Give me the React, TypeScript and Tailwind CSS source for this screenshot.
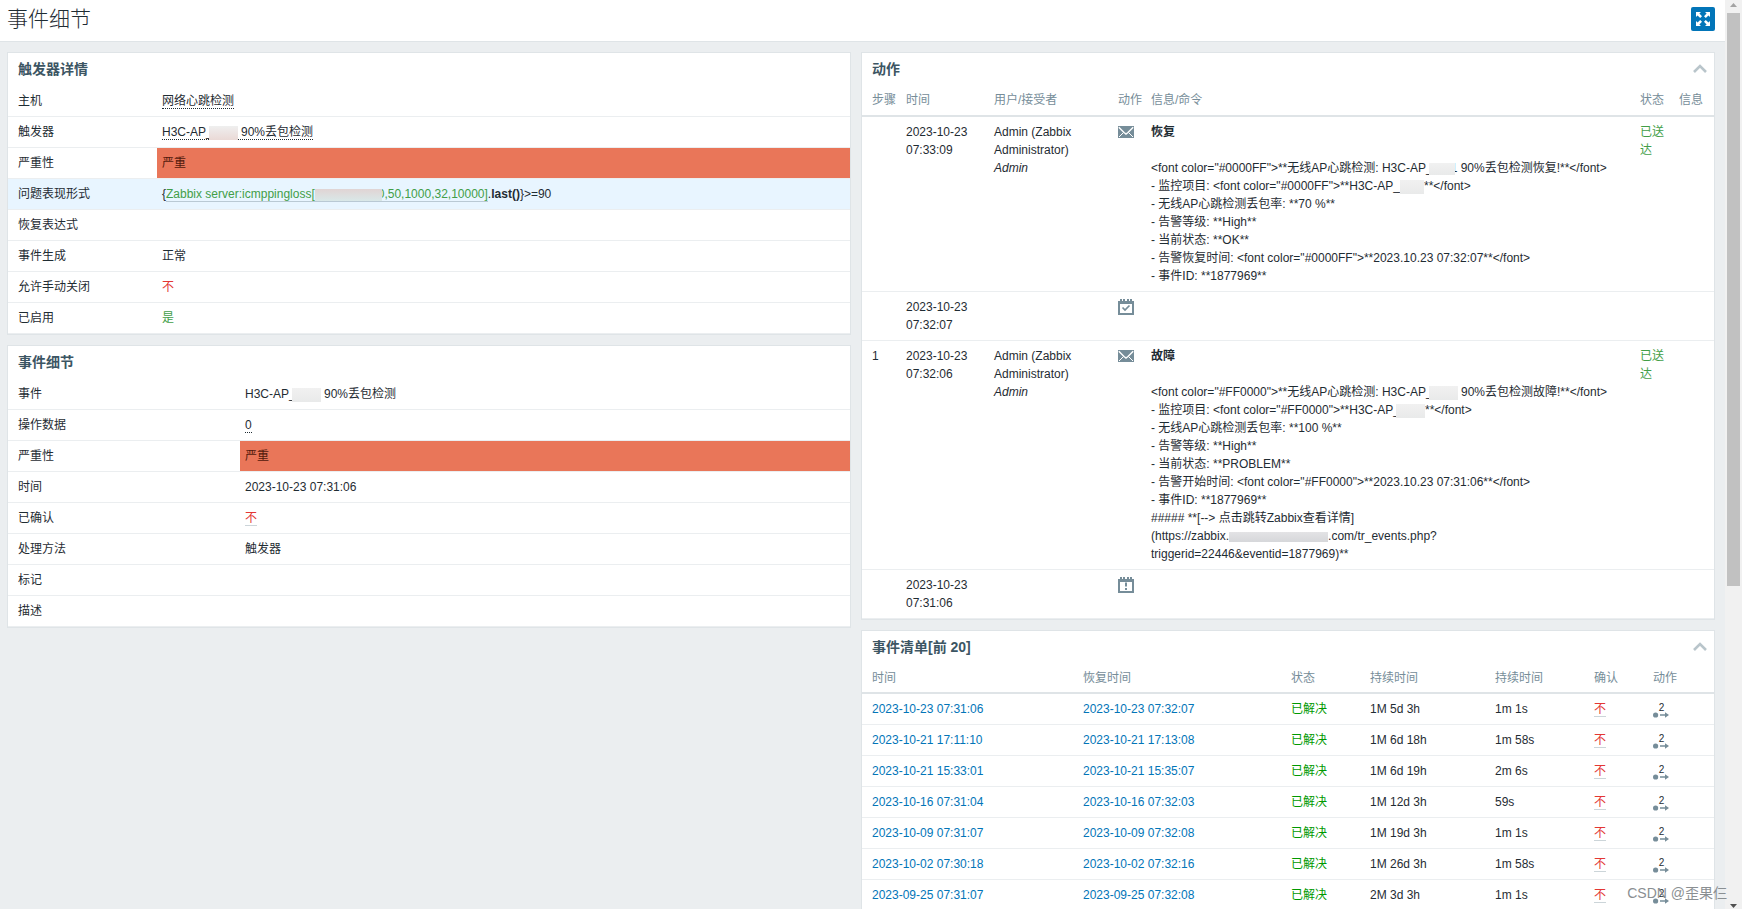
import React from 'react';
import { clsx } from 'clsx';

interface DetailRow {
  label: string;
  value?: React.ReactNode;
  severity?: boolean;
  highlight?: boolean;
}

interface ActionRow {
  step?: string;
  date: string;
  time: string;
  user?: boolean;
  icon: 'mail' | 'resolved' | 'problem';
  subject?: string;
  message?: React.ReactNode[];
}

interface EventRow {
  time: string;
  recovery: string;
  age: string;
  duration: string;
}

function Mask({ className }: { className: string }) {
  return <span className={clsx('relative inline-block align-middle bg-linear-to-b', className)} />;
}

const NAME_MASK = '-ml-1 w-[29px] h-[14px] from-[#f1f1f1] to-[#e9eaea]';
const dotted = 'border-b border-dotted border-[#1f2c33]';

const triggerRows: DetailRow[] = [
  { label: '主机', value: <a href="#host" className={dotted}>网络心跳检测</a> },
  {
    label: '触发器',
    value: (
      <a href="#trigger" className={dotted}>
        H3C-AP_<Mask className="-ml-1 w-[29px] h-[14px] from-[#efefef] to-[#ead9d6]" /> 90%丢包检测
      </a>
    ),
  },
  { label: '严重性', value: '严重', severity: true },
  {
    label: '问题表现形式',
    highlight: true,
    value: (
      <>
        {'{'}
        <a href="#item" className="text-[#429e47] border-b border-[#b9c9d4]">
          Zabbix server:icmppingloss[
          <Mask className="-mr-1 w-[67px] h-3 from-[#e0d4d4] to-[#d9e8e8]" />
          0,50,1000,32,10000]
        </a>
        .<b>last()</b>
        {'}>=90'}
      </>
    ),
  },
  { label: '恢复表达式' },
  { label: '事件生成', value: '正常' },
  { label: '允许手动关闭', value: <span className="text-[#e33734]">不</span> },
  { label: '已启用', value: <span className="text-[#429e47]">是</span> },
];

const eventDetailRows: DetailRow[] = [
  { label: '事件', value: <>H3C-AP_<Mask className={NAME_MASK} /> 90%丢包检测</> },
  { label: '操作数据', value: <a href="#data" className={dotted}>0</a> },
  { label: '严重性', value: '严重', severity: true },
  { label: '时间', value: '2023-10-23 07:31:06' },
  { label: '已确认', value: <a href="#ack" className="text-[#e33734] border-b border-[#ccd5d9]">不</a> },
  { label: '处理方法', value: '触发器' },
  { label: '标记' },
  { label: '描述' },
];

const actionRows: ActionRow[] = [
  {
    date: '2023-10-23',
    time: '07:33:09',
    user: true,
    icon: 'mail',
    subject: '恢复',
    message: [
      <>
        {'<font color="#0000FF">**无线AP心跳检测: H3C-AP_'}
        <Mask className="-ml-1 -mr-1 w-[26px] h-3 from-[#f1f1f1] to-[#e9eaea]" />
        {'1 90%丢包检测恢复!**</font>'}
      </>,
      <>
        {'- 监控项目: <font color="#0000FF">**H3C-AP_'}
        <Mask className="w-6 h-[14px] from-[#f1f1f1] to-[#e9eaea]" />
        {'**</font>'}
      </>,
      '- 无线AP心跳检测丢包率: **70 %**',
      '- 告警等级: **High**',
      '- 当前状态: **OK**',
      '- 告警恢复时间: <font color="#0000FF">**2023.10.23 07:32:07**</font>',
      '- 事件ID: **1877969**',
    ],
  },
  { date: '2023-10-23', time: '07:32:07', icon: 'resolved' },
  {
    step: '1',
    date: '2023-10-23',
    time: '07:32:06',
    user: true,
    icon: 'mail',
    subject: '故障',
    message: [
      <>
        {'<font color="#FF0000">**无线AP心跳检测: H3C-AP_'}
        <Mask className={NAME_MASK} />
        {' 90%丢包检测故障!**</font>'}
      </>,
      <>
        {'- 监控项目: <font color="#FF0000">**H3C-AP_'}
        <Mask className={NAME_MASK} />
        {'**</font>'}
      </>,
      '- 无线AP心跳检测丢包率: **100 %**',
      '- 告警等级: **High**',
      '- 当前状态: **PROBLEM**',
      '- 告警开始时间: <font color="#FF0000">**2023.10.23 07:31:06**</font>',
      '- 事件ID: **1877969**',
      '##### **[--> 点击跳转Zabbix查看详情]',
      <>
        (https://zabbix.
        <Mask className="w-[99px] h-[10px] from-[#e3e3e5] to-[#d6d7da]" />
        .com/tr_events.php?
      </>,
      'triggerid=22446&eventid=1877969)**',
    ],
  },
  { date: '2023-10-23', time: '07:31:06', icon: 'problem' },
];

const events: EventRow[] = [
  { time: '2023-10-23 07:31:06', recovery: '2023-10-23 07:32:07', age: '1M 5d 3h', duration: '1m 1s' },
  { time: '2023-10-21 17:11:10', recovery: '2023-10-21 17:13:08', age: '1M 6d 18h', duration: '1m 58s' },
  { time: '2023-10-21 15:33:01', recovery: '2023-10-21 15:35:07', age: '1M 6d 19h', duration: '2m 6s' },
  { time: '2023-10-16 07:31:04', recovery: '2023-10-16 07:32:03', age: '1M 12d 3h', duration: '59s' },
  { time: '2023-10-09 07:31:07', recovery: '2023-10-09 07:32:08', age: '1M 19d 3h', duration: '1m 1s' },
  { time: '2023-10-02 07:30:18', recovery: '2023-10-02 07:32:16', age: '1M 26d 3h', duration: '1m 58s' },
  { time: '2023-09-25 07:31:07', recovery: '2023-09-25 07:32:08', age: '2M 3d 3h', duration: '1m 1s' },
];

function MailIcon() {
  return (
    <svg width="16" height="18" viewBox="0 0 16 18" className="block">
      <rect y="3" width="16" height="12" fill="#768d99" />
      <path d="M0.8 4.2 L6 9.5 L8 11 L10 9.5 L15.2 4.2" fill="none" stroke="#fff" strokeWidth="1.4" />
      <path d="M1 14 L5.5 9.5 M15 14 L10.5 9.5" fill="none" stroke="#fff" strokeWidth="1" />
    </svg>
  );
}

function CalendarIcon({ resolved }: { resolved: boolean }) {
  return (
    <svg width="16" height="18" viewBox="0 0 16 18" className="block">
      <path d="M0 3h16v14H0z M2 6v9h12V6z" fill="#768d99" fillRule="evenodd" />
      <path d="M2 1h2v3H2z M5 1h2v3H5z M9 1h2v3H9z M12 1h2v3h-2z" fill="#768d99" />
      {resolved ? (
        <path d="M4.5 9.5 L7 12 L11.5 7.5" fill="none" stroke="#768d99" strokeWidth="1.7" />
      ) : (
        <path d="M7 6.5h2v4H7z M7 12h2v2H7z" fill="#768d99" />
      )}
    </svg>
  );
}

function CollapseButton() {
  return (
    <button type="button" aria-label="折叠" className="p-1">
      <svg width="14" height="10" viewBox="0 0 14 10" className="block">
        <path d="M1 8 L7 2 L13 8" fill="none" stroke="#b9c5cb" strokeWidth="2.6" />
      </svg>
    </button>
  );
}

function Panel({ title, collapsible, children }: { title: string; collapsible?: boolean; children: React.ReactNode }) {
  return (
    <section className="bg-white border border-[#dfe4e7]">
      <div className="flex items-center justify-between h-[33px] pb-[2px] pl-[10px] pr-[3px]">
        <h4 className="text-sm font-bold text-[#3c5563]">{title}</h4>
        {collapsible && <CollapseButton />}
      </div>
      {children}
    </section>
  );
}

function DetailTable({ rows, labelWidth }: { rows: DetailRow[]; labelWidth: string }) {
  return (
    <table className="w-full table-fixed border-separate border-spacing-0">
      <colgroup>
        <col className={labelWidth} />
        <col />
      </colgroup>
      <tbody>
        {rows.map((row) => (
          <tr key={row.label} className={clsx('h-[31px]', row.highlight && 'bg-[#e8f5ff]')}>
            <th scope="row" className="pl-[10px] text-left font-normal border-b border-[#ebeef0]">{row.label}</th>
            <td
              className={clsx(
                'px-[5px] border-b border-[#ebeef0]',
                row.severity && 'bg-[#e97659] bg-clip-padding text-[#52190b]'
              )}
            >
              {row.value}
            </td>
          </tr>
        ))}
      </tbody>
    </table>
  );
}

const headCell = 'px-[5px] pb-px first:pl-[10px] text-left font-normal border-b-2 border-[#dfe4e7]';
const cell = 'px-[5px] first:pl-[10px] border-b border-[#ebeef0]';
const topCell = 'px-[5px] py-[6px] first:pl-[10px] border-b border-[#ebeef0]';

function ActionsTable() {
  return (
    <table className="w-full table-fixed border-separate border-spacing-0">
      <colgroup>
        <col className="w-[39px]" />
        <col className="w-[88px]" />
        <col className="w-[124px]" />
        <col className="w-[33px]" />
        <col />
        <col className="w-[39px]" />
        <col className="w-[40px]" />
      </colgroup>
      <thead>
        <tr className="h-[31px] text-[#768d99] whitespace-nowrap">
          {['步骤', '时间', '用户/接受者', '动作', '信息/命令', '状态', '信息'].map((name, i) => (
            <th key={i} className={headCell}>{name}</th>
          ))}
        </tr>
      </thead>
      <tbody>
        {actionRows.map((row) => (
          <tr key={row.time} className="align-top">
            <td className={topCell}>{row.step}</td>
            <td className={topCell}>
              {row.date}
              <br />
              {row.time}
            </td>
            <td className={topCell}>
              {row.user && (
                <>
                  Admin (Zabbix Administrator)
                  <br />
                  <em>Admin</em>
                </>
              )}
            </td>
            <td className={topCell}>
              {row.icon === 'mail' ? <MailIcon /> : <CalendarIcon resolved={row.icon === 'resolved'} />}
            </td>
            <td className={topCell}>
              {row.message && (
                <>
                  <div className="font-bold mb-[18px]">{row.subject}</div>
                  {row.message.map((line, i) => (
                    <div key={i} className="h-[18px] whitespace-nowrap">{line}</div>
                  ))}
                </>
              )}
            </td>
            <td className={clsx(topCell, 'text-[#429e47]')}>{row.message && '已送达'}</td>
            <td className={topCell}></td>
          </tr>
        ))}
      </tbody>
    </table>
  );
}

function ActionCount() {
  return (
    <button type="button" aria-label="2 个动作" className="flex flex-col w-4 mt-[2px] text-[10px] leading-[9px]">
      <span className="w-full pl-px text-center">2</span>
      <svg width="16" height="6" viewBox="0 0 16 6" className="block">
        <circle cx="2.6" cy="3" r="2.6" fill="#768d99" />
        <path d="M7 2.2h5V0.2L16 3l-4 2.8V3.8H7z" fill="#768d99" />
      </svg>
    </button>
  );
}

function EventsTable() {
  return (
    <table className="w-full table-fixed border-separate border-spacing-0 whitespace-nowrap">
      <colgroup>
        <col className="w-[216px]" />
        <col className="w-[208px]" />
        <col className="w-[79px]" />
        <col className="w-[125px]" />
        <col className="w-[99px]" />
        <col className="w-[59px]" />
        <col className="w-[66px]" />
      </colgroup>
      <thead>
        <tr className="h-[30px] text-[#768d99]">
          {['时间', '恢复时间', '状态', '持续时间', '持续时间', '确认', '动作'].map((name, i) => (
            <th key={i} className={headCell}>{name}</th>
          ))}
        </tr>
      </thead>
      <tbody>
        {events.map((event) => (
          <tr key={event.time} className="h-[31px]">
            <td className={cell}><a href="#event" className="text-[#0275b8]">{event.time}</a></td>
            <td className={cell}><a href="#recovery" className="text-[#0275b8]">{event.recovery}</a></td>
            <td className={clsx(cell, 'text-[#009900]')}>已解决</td>
            <td className={cell}>{event.age}</td>
            <td className={cell}>{event.duration}</td>
            <td className={cell}><a href="#ack" className="text-[#e33734] border-b border-[#ccd5d9]">不</a></td>
            <td className={cell}><ActionCount /></td>
          </tr>
        ))}
      </tbody>
    </table>
  );
}

function Scrollbar() {
  return (
    <div className="flex flex-col items-center w-[17px] shrink-0 bg-[#f1f1f1]">
      <svg width="17" height="13" viewBox="0 0 17 13" className="block shrink-0">
        <path d="M5 7 L8.5 3 L12 7z" fill="#a3a3a3" />
      </svg>
      <div className="w-[13px] h-[63%] bg-[#c1c1c1]" />
      <svg width="17" height="8" viewBox="0 0 17 8" className="block shrink-0 mt-auto">
        <path d="M5 3 L12 3 L8.5 7z" fill="#505050" />
      </svg>
    </div>
  );
}

export default function App() {
  return (
    <div className="relative flex h-screen overflow-hidden bg-[#ebeef0] text-xs leading-[18px] text-[#1f2c33] font-['Liberation_Sans','Noto_Sans_CJK_SC',sans-serif]">
      <div className="flex-1 min-w-0">
        <header className="flex items-start justify-between h-[42px] pt-[7px] pl-[7px] pr-[10px] bg-white border-b border-[#dfe4e7]">
          <h1 className="text-[21px] leading-6 font-light">事件细节</h1>
          <button type="button" aria-label="全屏" className="flex items-center justify-center w-6 h-6 rounded-xs bg-[#0275b8]">
            <svg width="14" height="14" viewBox="0 0 14 14">
              <path
                d="M0 0h5L3.4 1.6 6 4.2 4.2 6 1.6 3.4 0 5z M14 0v5l-1.6-1.6L9.8 6 8 4.2l2.6-2.6L9 0z M0 14V9l1.6 1.6L4.2 8 6 9.8l-2.6 2.6L5 14z M14 14H9l1.6-1.6L8 9.8 9.8 8l2.6 2.6L14 9z"
                fill="#fff"
              />
            </svg>
          </button>
        </header>

        <main className="grid grid-cols-[844fr_854fr] items-start gap-[10px] pt-[10px] pl-[7px] pr-[10px]">
          <div className="flex flex-col gap-[10px]">
            <Panel title="触发器详情">
              <DetailTable rows={triggerRows} labelWidth="w-[149px]" />
            </Panel>
            <Panel title="事件细节">
              <DetailTable rows={eventDetailRows} labelWidth="w-[232px]" />
            </Panel>
          </div>
          <div className="flex flex-col gap-[10px]">
            <Panel title="动作" collapsible>
              <ActionsTable />
            </Panel>
            <Panel title="事件清单[前 20]" collapsible>
              <EventsTable />
            </Panel>
          </div>
        </main>
      </div>

      <Scrollbar />

      {/* Watermark */}
      <div className="absolute right-[15px] bottom-[6px] text-sm leading-5 text-[#8a8f92] pointer-events-none">
        CSDN @歪果仨
      </div>
    </div>
  );
}
